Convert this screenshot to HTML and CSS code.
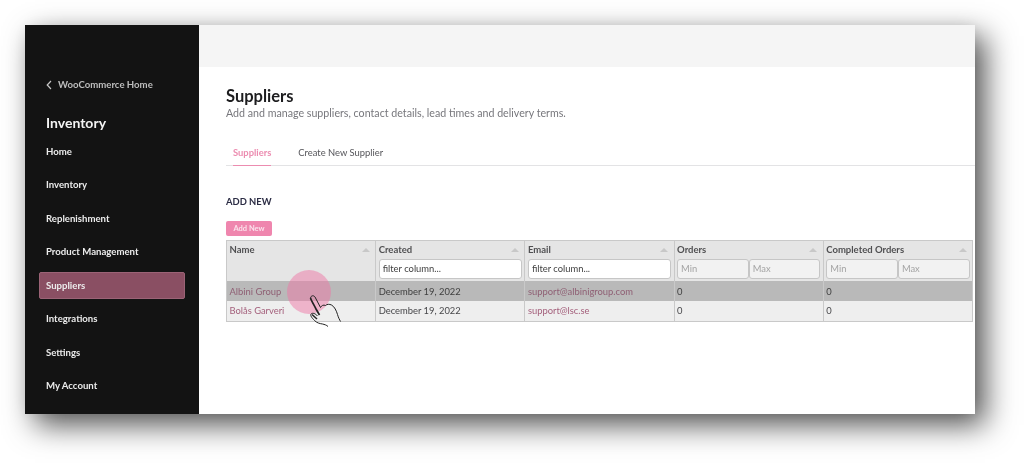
FILE: index.html
```html
<!DOCTYPE html>
<html lang="en">
<head>
<meta charset="utf-8">
<title>Suppliers</title>
<link rel="stylesheet" href="styles.css">
</head>
<body>
<div class="window">
  <aside class="sidebar">
    <a class="back"><svg class="chev" width="6" height="10" viewBox="0 0 6 10"><path d="M5 1 1.2 5 5 9" fill="none" stroke="#c8c8c8" stroke-width="1.2"/></svg>WooCommerce Home</a>
    <div class="brand">Inventory</div>
    <nav class="nav">
      <a class="nav-item">Home</a>
      <a class="nav-item">Inventory</a>
      <a class="nav-item">Replenishment</a>
      <a class="nav-item">Product Management</a>
      <a class="nav-item active">Suppliers</a>
      <a class="nav-item">Integrations</a>
      <a class="nav-item">Settings</a>
      <a class="nav-item">My Account</a>
    </nav>
  </aside>
  <main class="main">
    <div class="topbar"></div>
    <div class="content">
      <h1 class="title">Suppliers</h1>
      <p class="subtitle">Add and manage suppliers, contact details, lead times and delivery terms.</p>
      <div class="tabs">
        <a class="tab current">Suppliers</a>
        <a class="tab">Create New Supplier</a>
      </div>
      <h2 class="section">ADD NEW</h2>
      <button class="add">Add New</button>
      <table class="grid">
        <thead>
          <tr>
            <th><div class="th-head">Name<span class="sort"></span></div></th>
            <th><div class="th-head">Created<span class="sort"></span></div><input class="filter" placeholder="filter column..."></th>
            <th><div class="th-head">Email<span class="sort"></span></div><input class="filter" placeholder="filter column..."></th>
            <th><div class="th-head">Orders<span class="sort"></span></div><div class="range"><input class="num" placeholder="Min"><input class="num" placeholder="Max"></div></th>
            <th><div class="th-head">Completed Orders<span class="sort"></span></div><div class="range"><input class="num" placeholder="Min"><input class="num" placeholder="Max"></div></th>
          </tr>
        </thead>
        <tbody>
          <tr class="hover">
            <td><a>Albini Group</a></td><td>December 19, 2022</td><td><a>support@albinigroup.com</a></td><td>0</td><td>0</td>
          </tr>
          <tr>
            <td><a>Bolås Garveri</a></td><td>December 19, 2022</td><td><a>support@lsc.se</a></td><td>0</td><td>0</td>
          </tr>
        </tbody>
      </table>
    </div>
  </main>
  <div class="touch"></div>
  <svg class="hand" width="34" height="34" viewBox="0 0 34 34"><path d="M1.500 4C2 1.500 4.500 1 6 3L11.500 13.500C12.500 11.500 14.500 10.500 16.500 11.500 18 10 20.500 10 22.500 11 25.500 12.500 27.500 17 28.500 20.500 29.500 24 30.500 25.500 31.500 27.500" fill="none" stroke="#222" stroke-width="1"/><path d="M1.500 4C2.500 7 5 11 7 15L10.500 21" fill="none" stroke="#222" stroke-width="1.700"/><path d="M8.500 22C6.500 19.500 3.500 18.500 2 20 1 21.500 3 24 5.500 26.500 8 29 10.500 29.500 13.500 30 15.500 30.500 17.500 31 19 32.500" fill="none" stroke="#222" stroke-width="1"/><path d="M3 20.500 8 25" fill="none" stroke="#222" stroke-width="1.500"/></svg>
</div>
</body>
</html>
```
FILE: styles.css
```css
* { box-sizing: border-box; }
html, body { margin: 0; height: 100%; background: #fff; overflow: hidden; }
body { padding: 25px 49px 49px 25px; font-family: Lato, "Open Sans", sans-serif; }
.window {
  position: relative;
  display: flex;
  width: 950px;
  height: 389px;
  background: #fff;
  box-shadow: 10px 11px 28px rgba(0, 0, 0, .68), 0 0 16px rgba(0, 0, 0, .06);
  filter: blur(.3px);
}
.sidebar {
  width: 174px;
  flex: none;
  background: #131313;
  padding: 54px 14px 0;
  color: #f0f0f0;
}
.back {
  display: flex;
  align-items: center;
  gap: 6px;
  padding-left: 7px;
  font-size: 9.600px;
  font-weight: 700;
  line-height: 12px;
  color: #bdbdbd;
}
.brand {
  margin-top: 23px;
  padding-left: 7px;
  font-size: 14px;
  font-weight: 700;
  line-height: 18px;
  color: #f4f4f4;
}
.nav { display: flex; flex-direction: column; margin-top: 5.500px; }
.nav-item {
  display: flex;
  align-items: center;
  height: 27px;
  margin-bottom: 6.500px;
  padding-left: 7px;
  font-size: 9.600px;
  font-weight: 700;
  color: #ececec;
}
.nav-item.active {
  padding-left: 6px;
  background: #8a4f63;
  border: 1px solid #9b6376;
  border-radius: 2px;
}
.main { flex: 1; min-width: 0; display: flex; flex-direction: column; }
.topbar { height: 42px; flex: none; background: #f5f5f5; }
.content { padding: 20px 2px 0 27px; }
.title {
  margin: 0;
  font-size: 16.500px;
  font-weight: 700;
  line-height: 19px;
  color: #1d1d1f;
}
.subtitle {
  margin: -1px 0 0;
  font-size: 10.660px;
  line-height: 15px;
  color: #77777c;
}
.tabs {
  display: flex;
  gap: 27px;
  height: 29px;
  margin-top: 16.500px;
  margin-right: -2px;
  padding-left: 7px;
  border-bottom: 1px solid #e3e3e5;
}
.tab {
  height: 29px;
  padding-top: 9px;
  font-size: 9.400px;
  line-height: 14px;
  color: #55555a;
}
.tab.current {
  font-weight: 700;
  color: #ec8cb0;
  border-bottom: 1px solid #ec8cb0;
}
.section {
  margin: 29px 0 0;
  font-size: 9.400px;
  font-weight: 700;
  line-height: 13px;
  color: #2b2c44;
}
.add {
  display: block;
  width: 46px;
  height: 15px;
  margin: 13px 0 4px;
  padding: 0;
  border: 0;
  border-radius: 2px;
  background: #ef86ae;
  color: #fbe2ec;
  font: 700 7.500px Lato, sans-serif;
}
.grid {
  width: 747px;
  table-layout: fixed;
  border-collapse: collapse;
  border: 1px solid #c9c9c9;
  font-size: 9.400px;
  color: #47474a;
}
th, td { border-right: 1px solid #c9c9c9; padding: 0 2.500px; text-align: left; overflow: hidden; }
th { height: 41px; background: #e5e5e5; vertical-align: top; font-weight: 700; color: #505052; }
td { height: 20px; background: #eeeeee; }
td a { color: #a4607c; }
tr.hover td { background: #b9b9b9; color: #404040; }
tr.hover td a { color: #8f5f74; }
.th-head { display: flex; justify-content: space-between; align-items: center; height: 18px; padding-right: 3px; font-size: 9.500px; }
.sort { width: 0; height: 0; border: 4px solid transparent; border-top: 0; border-bottom: 4px solid #c8c8c8; }
.filter, .num {
  display: block;
  height: 20px;
  border: 1px solid #c6c6c6;
  border-radius: 3px;
  padding: 0 3px;
  background: #fff;
  font: 9.400px Lato, sans-serif;
  min-width: 0;
}
.filter { width: 100%; }
.filter::placeholder { color: #3f3f3f; opacity: 1; }
.range { display: flex; }
.num { width: 50%; background: #f2f2f2; }
.num::placeholder { color: #a4a4a4; opacity: 1; }
.touch {
  position: absolute;
  left: 262px;
  top: 245px;
  width: 44px;
  height: 44px;
  border-radius: 50%;
  background: rgba(238, 120, 165, .5);
}
.hand { position: absolute; left: 284px; top: 269px; }
```
